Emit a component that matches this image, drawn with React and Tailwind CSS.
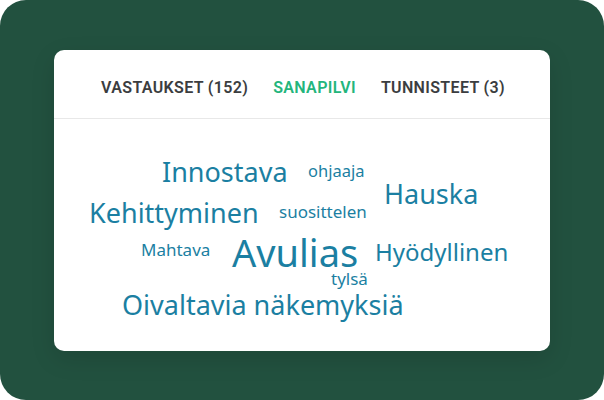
export default function App() {
  const words = [
    { t: "Innostava", x: 162, y: 180, s: 27 },
    { t: "ohjaaja", x: 308, y: 176, s: 16.5 },
    { t: "Hauska", x: 384, y: 202, s: 27 },
    { t: "Kehittyminen", x: 89, y: 221, s: 27 },
    { t: "suosittelen", x: 279, y: 217, s: 17 },
    { t: "Mahtava", x: 141, y: 255, s: 17 },
    { t: "Avulias", x: 232, y: 263, s: 38 },
    { t: "Hyödyllinen", x: 375, y: 259, s: 24 },
    { t: "tylsä", x: 331, y: 284, s: 17 },
    { t: "Oivaltavia näkemyksiä", x: 122, y: 313, s: 27 },
  ];
  return (
    <div className="w-[604px] h-[400px] bg-white">
      <div className="w-[604px] h-[400px] rounded-[26px] bg-[#22513f] pt-[50px] px-[54px]">
        <div className="relative w-[496px] h-[301px] bg-white rounded-[10px] shadow-[0_8px_24px_rgba(0,0,0,0.12)]">
          <div className="h-[69px] border-b border-[#e8e8e8] flex items-center justify-center gap-[25px] pl-[2px] pt-[8px] font-['Roboto',sans-serif] font-semibold text-[16px] tracking-[0.35px]">
            <span className="text-[#3b3d40]">VASTAUKSET (152)</span>
            <span className="text-[#23b57c]">SANAPILVI</span>
            <span className="text-[#3b3d40]">TUNNISTEET (3)</span>
          </div>
          {words.map((w) => (
            <span
              key={w.t}
              className="absolute whitespace-nowrap leading-none text-[#1b7fa2] font-['Noto_Sans',sans-serif]"
              style={{
                left: w.x - 54,
                top: w.y - 50 - w.s * 0.8,
                fontSize: w.s,
              }}
            >
              {w.t}
            </span>
          ))}
        </div>
      </div>
    </div>
  );
}
